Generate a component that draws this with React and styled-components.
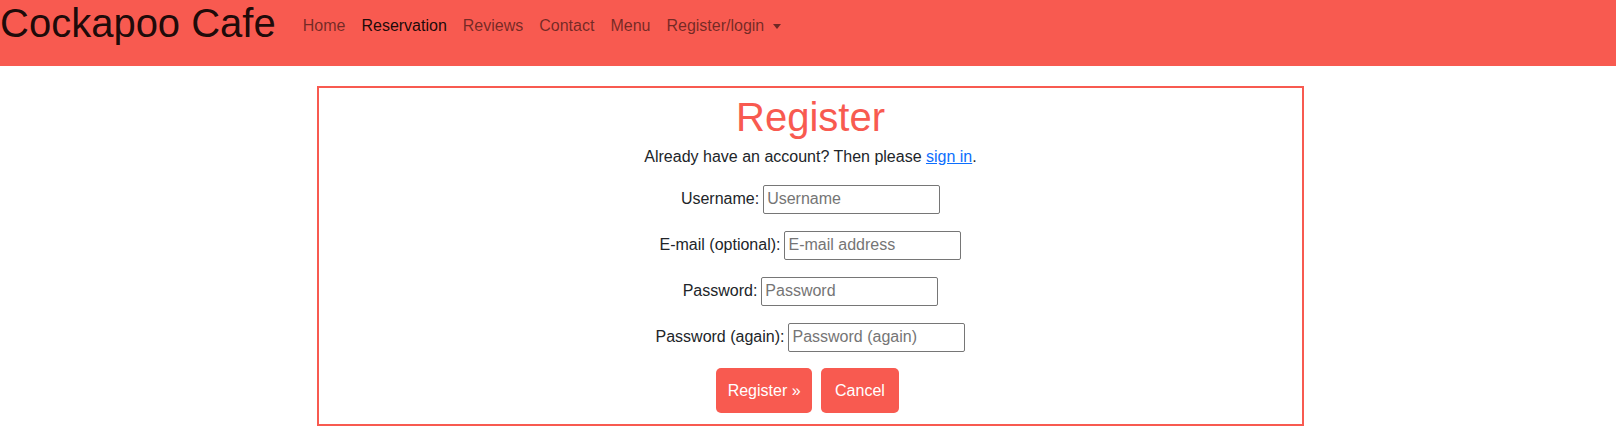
import React from "react";
import styled, { createGlobalStyle } from "styled-components";

const CORAL = "#f85a50";

const Global = createGlobalStyle`
  html, body { margin: 0; padding: 0; background: #fff; }
  body {
    font-family: "Liberation Sans", Arial, sans-serif;
    font-size: 16px;
    color: #212529;
  }
  * { box-sizing: border-box; }
`;

const Navbar = styled.nav`
  height: 66px;
  background: ${CORAL};
  display: flex;
  align-items: flex-start;
`;

const Brand = styled.a`
  font-size: 40px;
  line-height: 46px;
  color: rgba(0, 0, 0, 0.9);
  text-decoration: none;
  margin-right: 19px;
  white-space: nowrap;
`;

const NavList = styled.ul`
  list-style: none;
  margin: 14px 0 0;
  padding: 0;
  display: flex;
`;

const NavLink = styled.a`
  display: inline-flex;
  align-items: center;
  padding: 0 8px;
  line-height: 24px;
  font-size: 16px;
  text-decoration: none;
  color: ${(p) => (p.$active ? "rgba(0,0,0,0.9)" : "rgba(0,0,0,0.55)")};
`;

const Caret = styled.span`
  display: inline-block;
  margin-left: 9px;
  border-top: 5px solid rgba(0, 0, 0, 0.55);
  border-left: 4.5px solid transparent;
  border-right: 4.5px solid transparent;
  margin-top: 1px;
`;

const Main = styled.main`
  display: flex;
  justify-content: center;
  padding: 20px 0 0 5px;
`;

const Card = styled.section`
  width: 987px;
  border: 2px solid ${CORAL};
  padding: 5px 0 11px;
  display: flex;
  flex-direction: column;
  align-items: center;
  text-align: center;
`;

const Title = styled.h1`
  margin: 0;
  font-size: 40px;
  font-weight: 500;
  line-height: 48px;
  color: ${CORAL};
`;

const Lead = styled.p`
  margin: 4px 0 15px;
  line-height: 24px;
`;

const Link = styled.a`
  color: #0d6efd;
  text-decoration: underline;
`;

const Row = styled.div`
  display: flex;
  align-items: center;
  justify-content: center;
  gap: 4px;
  height: 30px;
  margin-bottom: 16px;
`;

const Label = styled.label`
  line-height: 24px;
`;

const Input = styled.input`
  width: 177px;
  height: 29px;
  border: 1px solid #767676;
  border-radius: 2px;
  padding: 1px 3px;
  font-family: "Liberation Sans", Arial, sans-serif;
  font-size: 16px;
  color: #212529;
  background: #fff;
  &::placeholder { color: #757575; }
`;

const Actions = styled.div`
  display: flex;
  gap: 9px;
  margin-right: 6px;
`;

const Button = styled.button`
  height: 45px;
  padding: 0 ${(p) => p.$pad}px;
  background: ${CORAL};
  color: #fff;
  border: none;
  border-radius: 5px;
  font-family: "Liberation Sans", Arial, sans-serif;
  font-size: 16px;
  cursor: pointer;
`;

const fields = [
  { label: "Username:", ph: "Username", type: "text" },
  { label: "E-mail (optional):", ph: "E-mail address", type: "email" },
  { label: "Password:", ph: "Password", type: "password" },
  { label: "Password (again):", ph: "Password (again)", type: "password" },
];

export default function App() {
  return (
    <>
      <Global />
      <Navbar>
        <Brand href="#">Cockapoo Cafe</Brand>
        <NavList>
          <li><NavLink href="#">Home</NavLink></li>
          <li><NavLink href="#" $active>Reservation</NavLink></li>
          <li><NavLink href="#">Reviews</NavLink></li>
          <li><NavLink href="#">Contact</NavLink></li>
          <li><NavLink href="#">Menu</NavLink></li>
          <li>
            <NavLink href="#">
              Register/login<Caret />
            </NavLink>
          </li>
        </NavList>
      </Navbar>
      <Main>
        <Card>
          <Title>Register</Title>
          <Lead>
            Already have an account? Then please <Link href="#">sign in</Link>.
          </Lead>
          {fields.map((f) => (
            <Row key={f.ph}>
              <Label>{f.label}</Label>
              <Input type={f.type} placeholder={f.ph} />
            </Row>
          ))}
          <Actions>
            <Button $pad={11.5}>Register »</Button>
            <Button $pad={14}>Cancel</Button>
          </Actions>
        </Card>
      </Main>
    </>
  );
}
